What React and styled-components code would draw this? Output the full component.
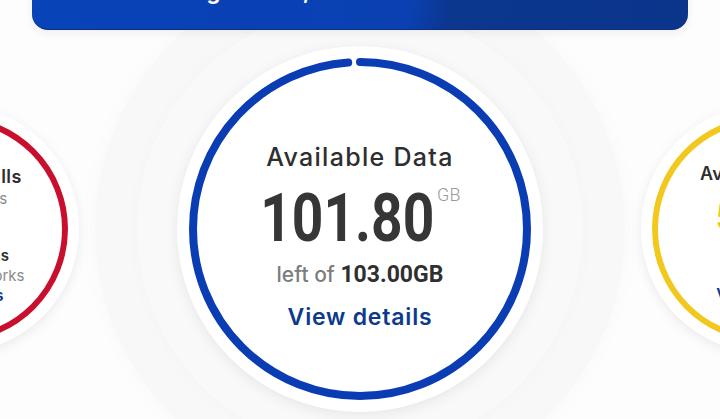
import React from "react";
import styled, { createGlobalStyle } from "styled-components";

const GlobalStyle = createGlobalStyle`
  html, body {
    margin: 0;
    padding: 0;
    background: #fdfdfd;
    overflow: hidden;
  }
  body {
    font-family: Inter, "Open Sans", sans-serif;
  }
`;

const Page = styled.div`
  width: 720px;
  height: 419px;
  overflow: hidden;
  display: flex;
  flex-direction: column;
  align-items: center;
  background: #fdfdfd;
`;

const Banner = styled.div`
  width: 656px;
  height: 90px;
  margin-top: -60px;
  flex-shrink: 0;
  border-radius: 16px;
  background: linear-gradient(100deg, #0843b8 0%, #0a40b2 58%, #0b378f 64%, #0b358b 100%);
  border-bottom: 1px solid #0a2f80;
  box-shadow: 0 3px 8px rgba(0, 0, 0, 0.06);
  display: flex;
  align-items: flex-end;
  padding: 0 0 27px 40px;
  box-sizing: border-box;
  position: relative;
  z-index: 2;
`;

const Greeting = styled.h1`
  margin: 0;
  font-size: 22px;
  line-height: 1;
  font-weight: 700;
  color: #fff;
  white-space: nowrap;
`;

const Row = styled.div`
  margin-top: 16px;
  display: flex;
  justify-content: center;
  align-items: center;
  gap: 98px;
  width: 720px;
`;

const Disc = styled.div`
  width: ${(p) => p.$size}px;
  height: ${(p) => p.$size}px;
  flex-shrink: 0;
  border-radius: 50%;
  background: #fff;
  position: relative;
  z-index: ${(p) => (p.$main ? 0 : 1)};
  display: flex;
  flex-direction: column;
  align-items: center;
  justify-content: center;
  box-shadow: ${(p) =>
    p.$main
      ? `0 3px 14px rgba(0,0,0,0.08),
         0 0 0 40px #f9f9fa,
         0 0 18px 40px rgba(0,0,0,0.02),
         0 0 0 82px #f8f8f9,
         0 0 22px 82px rgba(0,0,0,0.025)`
      : `0 3px 12px rgba(0,0,0,0.08)`};
`;

const RingSvg = styled.svg`
  position: absolute;
  inset: 0;
  pointer-events: none;
`;

const Content = styled.div`
  position: relative;
  display: flex;
  flex-direction: column;
  align-items: center;
  padding-top: ${(p) => p.$pt || 0}px;
`;

const Title = styled.div`
  font-size: 25px;
  font-weight: 500;
  color: #2e2e2e;
  letter-spacing: 1.3px;
  line-height: 1.2;
  white-space: nowrap;
`;

const SmallTitle = styled.div`
  font-size: 18px;
  font-weight: 600;
  color: #2e2e2e;
  letter-spacing: 0.5px;
  line-height: 20px;
  white-space: nowrap;
`;

const AmountRow = styled.div`
  display: flex;
  align-items: flex-start;
  margin-top: 14px;
`;

const Amount = styled.div`
  font-family: Roboto, sans-serif;
  font-weight: 700;
  font-size: 66px;
  line-height: 1;
  color: #363636;
  transform: scaleX(0.835);
  margin: 0 -17px;
`;

const Unit = styled.span`
  font-family: Roboto, sans-serif;
  font-size: 18px;
  font-weight: 300;
  color: #9a9a9a;
  margin: -2px 0 0 3px;
`;

const LeftOf = styled.div`
  margin-top: 9px;
  font-size: 21px;
  font-weight: 500;
  color: #7c7c7c;
  white-space: nowrap;
  line-height: 1.2;
`;

const Total = styled.span`
  font-family: Roboto, sans-serif;
  font-weight: 700;
  font-size: 23px;
  color: #2f2f2f;
`;

const Link = styled.a`
  margin-top: ${(p) => p.$mt || 0}px;
  font-size: ${(p) => p.$size || 23}px;
  font-weight: 600;
  color: #0c3a8c;
  text-decoration: none;
  letter-spacing: ${(p) => (p.$size ? 0.3 : 0.8)}px;
  line-height: 1.2;
  white-space: nowrap;
`;

const Sub = styled.div`
  font-size: ${(p) => p.$size || 14}px;
  color: ${(p) => (p.$dark ? "#2e2e2e" : "#8a8a8a")};
  font-weight: ${(p) => (p.$dark ? 600 : 400)};
  margin-top: ${(p) => p.$mt || 0}px;
  line-height: 20px;
  white-space: nowrap;
`;

const BigValue = styled.div`
  font-family: Roboto, sans-serif;
  font-size: 36px;
  font-weight: 700;
  line-height: 36px;
  letter-spacing: 4px;
  color: ${(p) => p.$color};
  margin: 16px 0 9px;
`;

function Ring({ size, r, stroke, color, progress = 1 }) {
  const c = 2 * Math.PI * r;
  const dash = progress >= 1 ? undefined : `${c * progress} ${c}`;
  return (
    <RingSvg width={size} height={size} viewBox={`0 0 ${size} ${size}`}>
      <circle
        cx={size / 2}
        cy={size / 2}
        r={r}
        fill="none"
        stroke={color}
        strokeWidth={stroke}
        strokeLinecap="round"
        strokeDasharray={dash}
        transform={`rotate(-90 ${size / 2} ${size / 2})`}
      />
    </RingSvg>
  );
}

export default function App() {
  return (
    <>
      <GlobalStyle />
      <Page>
        <Banner>
          <Greeting>Good evening Ahmed, welcome back to the hub</Greeting>
        </Banner>
        <Row>
          <Disc $size={248}>
            <Ring size={248} r={110} stroke={6} color="#c8102e" />
            <Content $pt={14}>
              <SmallTitle>Available Calls</SmallTitle>
              <Sub $mt={2} $size={15}>Unlimited mins</Sub>
              <Sub $dark $size={15} $mt={37}>Unlimited Mins</Sub>
              <Sub $size={15}>Across all networks</Sub>
              <Link $size={16}>View details</Link>
            </Content>
          </Disc>
          <Disc $size={366} $main>
            <Ring size={366} r={167} stroke={8} color="#0a3db3" progress={101.8 / 103} />
            <Content $pt={16}>
              <Title>Available Data</Title>
              <AmountRow>
                <Amount>101.80</Amount>
                <Unit>GB</Unit>
              </AmountRow>
              <LeftOf>
                left of <Total>103.00GB</Total>
              </LeftOf>
              <Link $mt={15}>View details</Link>
            </Content>
          </Disc>
          <Disc $size={248}>
            <Ring size={248} r={110} stroke={6} color="#f2c81e" />
            <Content $pt={10}>
              <SmallTitle>Available SMS</SmallTitle>
              <BigValue $color="#f2c81e">5000</BigValue>
              <Sub $dark $size={15}>Local SMS</Sub>
              <Sub $size={15}>All nets</Sub>
              <Link $size={16}>View details</Link>
            </Content>
          </Disc>
        </Row>
      </Page>
    </>
  );
}
